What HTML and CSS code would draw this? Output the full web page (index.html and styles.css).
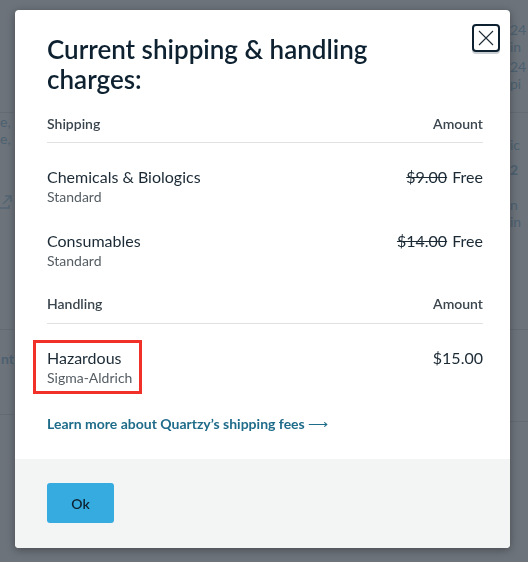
FILE: index.html
```html
<!DOCTYPE html>
<html>
<head>
<meta charset="utf-8">
<link rel="stylesheet" href="styles.css">
</head>
<body>
<div class="page">
  <div class="bg-col bg-left">
    <div class="bg-sec s1"></div>
    <div class="bg-sec s2">
      <div class="bg-t">e,</div>
      <div class="bg-t">e,</div>
      <div class="bg-ext"><svg width="12" height="14" viewBox="0 0 12 14"><path d="M5 1h6v6M11 1L3 9M9 10v3H0" fill="none" stroke="#536673" stroke-width="1.5"/></svg></div>
    </div>
    <div class="bg-sec s3">
      <div class="bg-b">nt</div>
    </div>
    <div class="bg-sec s4"></div>
  </div>
  <div class="bg-col bg-right">
    <div class="bg-sec r1">
      <div class="bg-t">24</div>
      <div class="bg-t">in</div>
      <div class="bg-t gap">24</div>
      <div class="bg-t">pi</div>
    </div>
    <div class="bg-sec r2">
      <div class="bg-t">ic</div>
      <div class="bg-b">2</div>
      <div class="bg-t gap2">n</div>
      <div class="bg-t">in</div>
    </div>
    <div class="bg-sec r3"></div>
    <div class="bg-sec r4"></div>
  </div>
</div>

<div class="modal">
  <div class="modal-body">
    <div class="head">
      <h1 class="title">Current shipping &amp; handling charges:</h1>
      <button class="close" aria-label="Close">
        <svg width="16" height="16" viewBox="0 0 16 16"><path d="M1 1L15 15M15 1L1 15" stroke="#1c2b36" stroke-width="1.1" fill="none"/></svg>
      </button>
    </div>

    <div class="th"><span>Shipping</span><span>Amount</span></div>
    <div class="row">
      <div class="item"><div class="name">Chemicals &amp; Biologics</div><div class="sub">Standard</div></div>
      <div class="amt"><s>$9.00</s> Free</div>
    </div>
    <div class="row">
      <div class="item"><div class="name">Consumables</div><div class="sub">Standard</div></div>
      <div class="amt"><s>$14.00</s> Free</div>
    </div>

    <div class="th th2"><span>Handling</span><span>Amount</span></div>
    <div class="row">
      <div class="item highlight"><div class="name">Hazardous</div><div class="sub">Sigma-Aldrich</div></div>
      <div class="amt">$15.00</div>
    </div>

    <a class="learn" href="#">Learn more about Quartzy’s shipping fees <span class="arrow">⟶</span></a>
  </div>
  <div class="modal-foot">
    <button class="ok">Ok</button>
  </div>
</div>
</body>
</html>
```
FILE: styles.css
```css
html, body {
  margin: 0;
  padding: 0;
}
body {
  width: 528px;
  height: 562px;
  overflow: hidden;
  background: #6c737a;
  font-family: "Lato", "Liberation Sans", sans-serif;
}

/* dimmed page behind the modal */
.page {
  display: flex;
  justify-content: space-between;
  height: 562px;
}
.bg-col {
  color: #4c6171;
  font-size: 14px;
  line-height: 17px;
}
.bg-left {
  width: 14px;
  text-align: right;
}
.bg-right {
  width: 18px;
  text-align: left;
}
.bg-sec {
  box-sizing: border-box;
  border-bottom: 1px solid #646b72;
}
.bg-t, .bg-b {
  white-space: nowrap;
}
.bg-b {
  font-weight: 700;
}
.s1 { height: 113px; }
.s2 { height: 217px; padding-top: 0; padding-right: 6px; }
.s3 { height: 85px; padding-top: 20px; }
.s4 { border-bottom: none; }
.bg-ext {
  margin-top: 48px;
  text-align: right;
  padding-right: 2px;
}
.r1 { height: 113px; padding-top: 21px; }
.r1 .gap { margin-top: 3px; }
.r2 { height: 217px; padding-top: 23px; }
.r2 .bg-b { margin-top: 8px; }
.r2 .gap2 { margin-top: 18px; }
.r3 { height: 92px; }
.r4 { border-bottom: none; }

/* modal */
.modal {
  position: fixed;
  left: 15px;
  top: 10px;
  width: 495px;
  height: 538px;
  background: #fff;
  border-radius: 4px;
  box-shadow: 0 2px 8px rgba(0,0,0,0.35);
  display: flex;
  flex-direction: column;
  overflow: hidden;
}
.modal-body {
  flex: 1;
  padding: 0 27px 0 32px;
}
.head {
  display: flex;
  justify-content: space-between;
  align-items: flex-start;
}
.title {
  margin: 24px 0 0 0;
  font-size: 26px;
  line-height: 30px;
  font-weight: 600;
  color: #0d2130;
  width: 340px;
}
.close {
  margin-top: 14px;
  margin-right: -17px;
  width: 28px;
  height: 28px;
  padding: 0;
  box-sizing: border-box;
  border: 2px solid #0d2130;
  border-radius: 4px;
  background: #fff;
  box-shadow: 0 2px 0 #c9ced2;
  display: flex;
  align-items: center;
  justify-content: center;
}
.th {
  display: flex;
  justify-content: space-between;
  font-size: 14px;
  font-weight: 600;
  color: #3a454d;
  margin-top: 22px;
  padding-bottom: 10px;
  border-bottom: 1px solid #dfe1e2;
  line-height: 16px;
}
.th2 {
  margin-top: 25px;
  padding-bottom: 11px;
}
.row {
  display: flex;
  justify-content: space-between;
  align-items: flex-start;
  padding-top: 24px;
}
.name {
  font-size: 16px;
  line-height: 20px;
  color: #1b2a35;
}
.sub {
  font-size: 14px;
  line-height: 20px;
  color: #555d63;
}
.amt {
  font-size: 16px;
  line-height: 20px;
  color: #1b2a35;
}
.amt s {
  margin-right: 1px;
}
.highlight {
  outline: 3px solid #f2302a;
  margin: -5px 0 -3px -11px;
  padding: 5px 7px 3px 11px;
}
.learn {
  display: block;
  margin-top: 27px;
  font-size: 14px;
  line-height: 18px;
  font-weight: 700;
  color: #1f6c8a;
  text-decoration: none;
}
.arrow {
  font-weight: 400;
}
.modal-foot {
  height: 89px;
  background: #f3f4f4;
  padding: 24px 32px 0;
  box-sizing: border-box;
}
.ok {
  width: 67px;
  height: 40px;
  border: none;
  border-radius: 3px;
  background: #36abe0;
  color: #0d2130;
  font-family: "Lato", "Liberation Sans", sans-serif;
  font-size: 14px;
  font-weight: 600;
}
```
